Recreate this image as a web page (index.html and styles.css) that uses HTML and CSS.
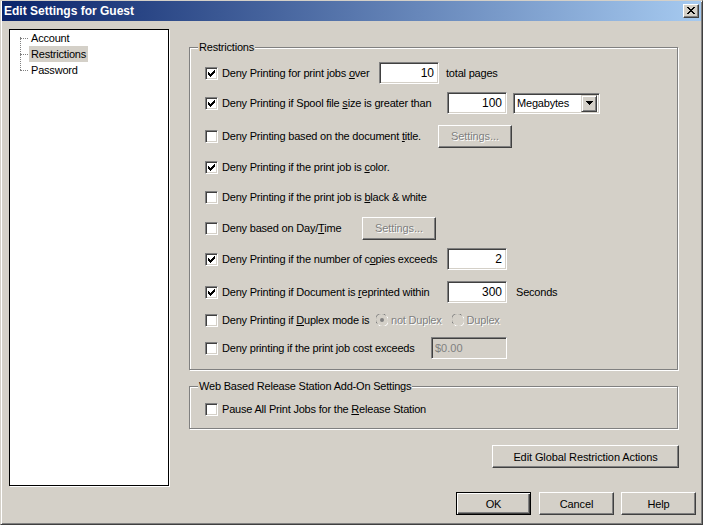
FILE: index.html
```html
<!DOCTYPE html>
<html>
<head>
<meta charset="utf-8">
<link rel="stylesheet" href="styles.css">
</head>
<body>
<div class="window">
  <div class="titlebar">
    <span class="title">Edit Settings for Guest</span>
    <span class="close-btn"><svg width="8" height="7" viewBox="0 0 8 7" shape-rendering="crispEdges"><path d="M0 0h2v1h-2zM6 0h2v1h-2zM1 1h2v1h-2zM5 1h2v1h-2zM2 2h4v1h-4zM3 3h2v1h-2zM2 4h4v1h-4zM1 5h2v1h-2zM5 5h2v1h-2zM0 6h2v1h-2zM6 6h2v1h-2z" fill="#000"/></svg></span>
  </div>
  <div class="client">
    <div class="main">
      <div class="tree">
        <ul class="tree-list">
          <li class="tree-item">Account</li>
          <li class="tree-item"><span class="sel">Restrictions</span></li>
          <li class="tree-item tree-last">Password</li>
        </ul>
      </div>
      <div class="right">
        <div class="group group-restrictions">
          <span class="group-label">Restrictions</span>
          <div class="row">
            <label class="opt w174"><span class="cb"><svg class="check" width="9" height="9" viewBox="0 0 9 9" shape-rendering="crispEdges"><path d="M7 1h1v1h-1zM6 2h2v1h-2zM1 3h1v1h-1zM5 3h3v1h-3zM1 4h2v1h-2zM4 4h3v1h-3zM1 5h5v1h-5zM2 6h3v1h-3zM3 7h1v1h-1z" fill="#000"/></svg></span><span class="txt">Deny Printing for print jobs <u>o</u>ver</span></label>
            <span class="field num">10</span>
            <span class="after after-pages">total pages</span>
          </div>
          <div class="row mt8">
            <label class="opt w242"><span class="cb"><svg class="check" width="9" height="9" viewBox="0 0 9 9" shape-rendering="crispEdges"><path d="M7 1h1v1h-1zM6 2h2v1h-2zM1 3h1v1h-1zM5 3h3v1h-3zM1 4h2v1h-2zM4 4h3v1h-3zM1 5h5v1h-5zM2 6h3v1h-3zM3 7h1v1h-1z" fill="#000"/></svg></span><span class="txt">Deny Printing if Spool file <u>s</u>ize is greater than</span></label>
            <span class="field num">100</span>
            <span class="select">
              <span class="select-text">Megabytes</span>
              <span class="select-arrow"><svg width="7" height="4" viewBox="0 0 7 4" shape-rendering="crispEdges"><path d="M0 0h7v1h-7zM1 1h5v1h-5zM2 2h3v1h-3zM3 3h1v1h-1z" fill="#000"/></svg></span>
            </span>
          </div>
          <div class="row row-tall mt10">
            <label class="opt w233"><span class="cb"></span><span class="txt">Deny Printing based on the document <u>t</u>itle.</span></label>
            <span class="btn btn-disabled btn-settings">Settings...</span>
          </div>
          <div class="row mt8">
            <label class="opt"><span class="cb"><svg class="check" width="9" height="9" viewBox="0 0 9 9" shape-rendering="crispEdges"><path d="M7 1h1v1h-1zM6 2h2v1h-2zM1 3h1v1h-1zM5 3h3v1h-3zM1 4h2v1h-2zM4 4h3v1h-3zM1 5h5v1h-5zM2 6h3v1h-3zM3 7h1v1h-1z" fill="#000"/></svg></span><span class="txt">Deny Printing if the print job is <u>c</u>olor.</span></label>
          </div>
          <div class="row mt8">
            <label class="opt"><span class="cb"></span><span class="txt">Deny Printing if the print job is <u>b</u>lack &amp; white</span></label>
          </div>
          <div class="row mt9">
            <label class="opt w157"><span class="cb"></span><span class="txt">Deny based on Day/<u>T</u>ime</span></label>
            <span class="btn btn-disabled btn-settings">Settings...</span>
          </div>
          <div class="row mt9">
            <label class="opt w242"><span class="cb"><svg class="check" width="9" height="9" viewBox="0 0 9 9" shape-rendering="crispEdges"><path d="M7 1h1v1h-1zM6 2h2v1h-2zM1 3h1v1h-1zM5 3h3v1h-3zM1 4h2v1h-2zM4 4h3v1h-3zM1 5h5v1h-5zM2 6h3v1h-3zM3 7h1v1h-1z" fill="#000"/></svg></span><span class="txt">Deny Printing if the number of c<u>o</u>pies exceeds</span></label>
            <span class="field num">2</span>
          </div>
          <div class="row mt11">
            <label class="opt w242"><span class="cb"><svg class="check" width="9" height="9" viewBox="0 0 9 9" shape-rendering="crispEdges"><path d="M7 1h1v1h-1zM6 2h2v1h-2zM1 3h1v1h-1zM5 3h3v1h-3zM1 4h2v1h-2zM4 4h3v1h-3zM1 5h5v1h-5zM2 6h3v1h-3zM3 7h1v1h-1z" fill="#000"/></svg></span><span class="txt">Deny Printing if Document is <u>r</u>eprinted within</span></label>
            <span class="field num">300</span>
            <span class="after after-seconds">Seconds</span>
          </div>
          <div class="row mt6">
            <label class="opt w171"><span class="cb"></span><span class="txt">Deny Printing if <u>D</u>uplex mode is</span></label>
            <span class="radio"><svg width="12" height="12" viewBox="0 0 12 12"><circle cx="6" cy="6" r="5.5" fill="#d4d0c8"/><path d="M1.2 9.5 A5.5 5.5 0 0 1 9.5 1.2" fill="none" stroke="#808080"/><path d="M10.8 2.5 A5.5 5.5 0 0 1 2.5 10.8" fill="none" stroke="#fff"/><circle cx="6" cy="6" r="2" fill="#808080"/></svg></span>
            <span class="radio-text">not Duplex</span>
            <span class="radio radio-second"><svg width="12" height="12" viewBox="0 0 12 12"><circle cx="6" cy="6" r="5.5" fill="#d4d0c8"/><path d="M1.2 9.5 A5.5 5.5 0 0 1 9.5 1.2" fill="none" stroke="#808080"/><path d="M10.8 2.5 A5.5 5.5 0 0 1 2.5 10.8" fill="none" stroke="#fff"/></svg></span>
            <span class="radio-text">Duplex</span>
          </div>
          <div class="row mt6">
            <label class="opt w226"><span class="cb"></span><span class="txt">Deny printing if the print job cost exceeds</span></label>
            <span class="field field-disabled">$0.00</span>
          </div>
        </div>
        <div class="group group-web">
          <span class="group-label">Web Based Release Station Add-On Settings</span>
          <div class="row">
            <label class="opt"><span class="cb"></span><span class="txt">Pause All Print Jobs for the <u>R</u>elease Station</span></label>
          </div>
        </div>
        <div class="global-row">
          <span class="btn btn-global">Edit Global Restriction Actions</span>
        </div>
      </div>
    </div>
    <div class="dialog-buttons">
      <span class="btn btn-default">OK</span>
      <span class="btn">Cancel</span>
      <span class="btn">Help</span>
    </div>
  </div>
</div>
</body>
</html>
```
FILE: styles.css
```css
* { box-sizing: border-box; }
html, body { margin: 0; padding: 0; background: #d4d0c8; }
body {
  font-family: "Liberation Sans", Arial, sans-serif;
  font-size: 11px;
  letter-spacing: -0.2px;
  color: #000;
}
.window {
  width: 703px;
  height: 525px;
  background: #d4d0c8;
  border: 1px solid;
  border-color: #d4d0c8 #404040 #404040 #d4d0c8;
  box-shadow: inset 1px 1px 0 #fff, inset -1px -1px 0 #808080;
  padding: 0 1px 1px 1px;
  display: flex;
  flex-direction: column;
}
.titlebar {
  height: 20px;
  background: linear-gradient(to right, #0a246a, #a6caf0);
  display: flex;
  align-items: center;
  justify-content: space-between;
  padding: 0 2px 0 2px;
}
.title {
  color: #fff;
  font-weight: bold;
  font-size: 12px;
  letter-spacing: 0;
}
.close-btn {
  width: 16px;
  height: 14px;
  background: #d4d0c8;
  border: 1px solid;
  border-color: #fff #404040 #404040 #fff;
  box-shadow: inset -1px -1px 0 #808080;
  display: flex;
  align-items: center;
  justify-content: center;
  padding-bottom: 1px;
}
.close-btn svg { display: block; }
.client {
  flex: 1;
  display: flex;
  flex-direction: column;
  padding: 8px 5px 0 7px;
}
.main { display: flex; }
.tree {
  width: 160px;
  height: 457px;
  background: #fff;
  border: 1px solid #000;
  box-shadow: 1px 1px 0 #fff;
}
.tree-list {
  list-style: none;
  margin: 0;
  padding: 0 0 0 10px;
}
.tree-item {
  position: relative;
  height: 16px;
  line-height: 16px;
  padding-left: 11px;
  white-space: nowrap;
}
.tree-item::before {
  content: "";
  position: absolute;
  left: 0;
  top: 8px;
  width: 8px;
  border-top: 1px dotted #808080;
}
.tree-item::after {
  content: "";
  position: absolute;
  left: 0;
  top: 8px;
  height: 16px;
  border-left: 1px dotted #808080;
}
.tree-item.tree-last::after { display: none; }
.tree-item:first-child::after { top: 7px; height: 17px; }
.sel {
  display: inline-block;
  background: #d4d0c8;
  padding: 0 2px;
  margin-left: -2px;
  height: 16px;
}

.right {
  margin-left: 20px;
  padding-top: 18px;
  width: 490px;
  display: flex;
  flex-direction: column;
}
.group {
  position: relative;
  border: 1px solid #808080;
  box-shadow: inset 1px 1px 0 #fff, 1px 1px 0 #fff;
  width: 489px;
  padding-left: 15px;
}
.group-restrictions {
  height: 323px;
  padding-top: 14px;
}
.group-web {
  margin-top: 16px;
  height: 43px;
  padding-top: 11px;
}
.group-label {
  position: absolute;
  top: -7px;
  left: 8px;
  padding: 0 1px;
  background: #d4d0c8;
  line-height: 13px;
  white-space: nowrap;
}
.row {
  height: 22px;
  display: flex;
  align-items: center;
  white-space: nowrap;
}
.row-tall { height: 24px; }
.mt6 { margin-top: 6px; }
.mt8 { margin-top: 8px; }
.mt9 { margin-top: 9px; }
.mt10 { margin-top: 10px; }
.mt11 { margin-top: 11px; }
.opt {
  display: flex;
  align-items: center;
  flex-shrink: 0;
}
.txt { white-space: pre; }
.w157 { width: 157px; }
.w171 { width: 171px; }
.w174 { width: 174px; }
.w226 { width: 226px; }
.w233 { width: 233px; }
.w242 { width: 242px; }
u { text-decoration: underline; text-underline-offset: 1px; }
.cb {
  width: 13px;
  height: 13px;
  flex-shrink: 0;
  background: #fff;
  border: 1px solid;
  border-color: #808080 #fff #fff #808080;
  box-shadow: inset 1px 1px 0 #404040, inset -1px -1px 0 #d4d0c8;
  padding: 1px;
  margin-right: 4px;
}
.check { display: block; }
.field {
  height: 22px;
  background: #fff;
  border: 1px solid;
  border-color: #808080 #fff #fff #808080;
  box-shadow: inset 1px 1px 0 #404040, inset -1px -1px 0 #d4d0c8;
  display: flex;
  align-items: center;
  padding: 0 4px;
  font-size: 12px;
  letter-spacing: 0;
}
.num {
  width: 60px;
  justify-content: flex-end;
}
.field-disabled {
  width: 76px;
  background: #d4d0c8;
  color: #808080;
  font-size: 11px;
  padding-left: 3px;
}
.after-pages { margin-left: 7px; }
.after-seconds { margin-left: 9px; }
.select {
  margin-left: 6px;
  width: 87px;
  height: 21px;
  background: #fff;
  border: 1px solid;
  border-color: #808080 #fff #fff #808080;
  box-shadow: inset 1px 1px 0 #404040, inset -1px -1px 0 #d4d0c8;
  display: flex;
  align-items: center;
  padding: 2px;
}
.select-text {
  flex: 1;
  padding-left: 1px;
}
.select-arrow {
  width: 16px;
  height: 17px;
  background: #d4d0c8;
  border: 1px solid;
  border-color: #d4d0c8 #404040 #404040 #d4d0c8;
  box-shadow: inset 1px 1px 0 #fff, inset -1px -1px 0 #808080;
  display: flex;
  align-items: center;
  justify-content: center;
}
.select-arrow svg { display: block; }
.btn {
  display: flex;
  align-items: center;
  justify-content: center;
  width: 75px;
  height: 23px;
  background: #d4d0c8;
  border: 1px solid;
  border-color: #fff #404040 #404040 #fff;
  box-shadow: inset -1px -1px 0 #808080;
  white-space: nowrap;
  font-size: 11px;
  letter-spacing: -0.1px;
}
.btn-disabled {
  color: #808080;
  text-shadow: 1px 1px 0 #fff;
}
.btn-settings { width: 74px; }
.radio { display: flex; flex-shrink: 0; }
.radio svg { display: block; }
.radio-text {
  color: #808080;
  text-shadow: 1px 1px 0 #fff;
  margin-left: 3px;
}
.radio-second { margin-left: 10px; }
.global-row {
  margin-top: 16px;
  display: flex;
  justify-content: flex-end;
}
.btn-global {
  width: 187px;
  height: 23px;
}
.dialog-buttons {
  margin-top: 6px;
  display: flex;
  justify-content: flex-end;
  gap: 7px;
}
.dialog-buttons .btn { width: 75px; height: 23px; }
.btn-default {
  border: 1px solid #000;
  box-shadow: inset 1px 1px 0 #fff, inset -1px -1px 0 #404040, inset -2px -2px 0 #808080;
  margin-right: 1px;
}
```
